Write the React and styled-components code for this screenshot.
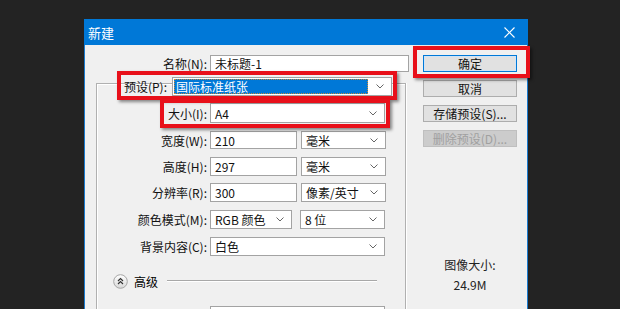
import React from "react";
import styled, { createGlobalStyle } from "styled-components";

const GlobalStyle = createGlobalStyle`
  html, body { margin: 0; padding: 0; background: #232323; overflow: hidden; }
  body { font-family: "Noto Sans CJK SC", "Noto Sans", sans-serif; font-size: 12px; color: #000; }
  * { box-sizing: border-box; }
`;

const Desktop = styled.div`
  width: 620px;
  height: 309px;
  overflow: hidden;
  padding: 19px 0 0 84px;
  background: #232323;
`;

const Window = styled.div`
  position: relative;
  width: 444px;
  height: 300px;
  background: #f0f0f0;
  box-shadow: inset 1px 0 0 #1a7bd0, inset -1px 0 0 #1a7bd0;
`;

const TitleBar = styled.div`
  height: 26px;
  background: #0078d7;
  color: #fff;
  display: flex;
  align-items: center;
  justify-content: space-between;
  padding: 0 13px 0 4px;
  font-size: 13px;
`;

const Body = styled.div`
  display: flex;
`;

const LeftCol = styled.div`
  width: 339px;
  display: flex;
  flex-direction: column;
`;

const Group = styled.div`
  margin: 11px 0 0 12px;
  width: 310px;
  height: 260px;
  border: 1px solid #b0b0b0;
  box-shadow: inset 1px 1px 0 #fff, 1px 0 0 #fff;
  display: flex;
  flex-direction: column;
`;

const Row = styled.div`
  display: flex;
  align-items: center;
  gap: ${(p) => p.$gap ?? 3}px;
  margin-top: ${(p) => p.$mt}px;
  height: ${(p) => p.$h ?? 19}px;
  flex-shrink: 0;
`;

const Label = styled.span`
  width: ${(p) => p.$w}px;
  text-align: right;
  white-space: nowrap;
  color: #111;
`;

const Fields = styled.div`
  display: flex;
  gap: ${(p) => p.$gap ?? 4}px;
  height: 100%;
`;

const TextBox = styled.div`
  width: ${(p) => p.$w}px;
  height: 100%;
  background: #fff;
  border: 1px solid #a3a3a3;
  padding: 0 7px 0 4px;
  display: flex;
  align-items: center;
  justify-content: space-between;
  white-space: nowrap;
  color: #111;
`;

const Selected = styled.span`
  flex: 1;
  align-self: stretch;
  margin: 1px 8px 1px -3px;
  padding-left: 2px;
  background: #0078d7;
  color: #fff;
  outline: 1px dotted #c88a3a;
  outline-offset: -1px;
  display: flex;
  align-items: center;
`;

const AdvancedRow = styled.div`
  display: flex;
  align-items: center;
  height: 18px;
  margin-top: 16px;
  padding-left: 16px;
  gap: 6px;
  flex-shrink: 0;
`;

const Etched = styled.div`
  flex: 1;
  height: 2px;
  border-top: 1px solid #a8a8a8;
  border-bottom: 1px solid #fff;
  margin: 0 28px 0 3px;
`;

const RightCol = styled.div`
  width: 94px;
  padding-top: 10px;
  display: flex;
  flex-direction: column;
  gap: 8px;
`;

const Button = styled.button`
  width: 94px;
  height: 17px;
  padding: 0;
  font: inherit;
  font-size: 12px;
  line-height: 15px;
  background: ${(p) => (p.$disabled ? "#cccccc" : "#e1e1e1")};
  color: ${(p) => (p.$disabled ? "#a0a0a0" : "#111")};
  border: 1px solid ${(p) => (p.$primary ? "#0078d7" : p.$disabled ? "#bfbfbf" : "#adadad")};
  box-shadow: ${(p) => (p.$primary ? "inset 0 0 0 1px #cfe4f7" : "none")};
`;

const ImageSize = styled.div`
  margin-top: 100px;
  text-align: center;
  line-height: 20px;
  color: #222;
`;

const Mark = styled.div`
  position: absolute;
  left: ${(p) => p.$x}px;
  top: ${(p) => p.$y}px;
  width: ${(p) => p.$w}px;
  height: ${(p) => p.$h}px;
  border: 4px solid #e8101a;
  box-shadow: 2px 2px 3px rgba(0, 0, 0, 0.45);
  pointer-events: none;
`;

const Chevron = () => (
  <svg width="8" height="5" viewBox="0 0 8 5">
    <polyline points="0.5,0.5 4,4 7.5,0.5" fill="none" stroke="#666" strokeWidth="1" />
  </svg>
);

const CloseIcon = () => (
  <svg width="11" height="11" viewBox="0 0 11 11">
    <line x1="0.5" y1="0.5" x2="10.5" y2="10.5" stroke="#fff" strokeWidth="1.1" />
    <line x1="10.5" y1="0.5" x2="0.5" y2="10.5" stroke="#fff" strokeWidth="1.1" />
  </svg>
);

const CollapseIcon = () => (
  <svg width="15" height="15" viewBox="0 0 15 15">
    <defs>
      <linearGradient id="cg" x1="0" y1="0" x2="0" y2="1">
        <stop offset="0" stopColor="#ffffff" />
        <stop offset="1" stopColor="#d8d8d8" />
      </linearGradient>
    </defs>
    <circle cx="7.5" cy="7.5" r="6.8" fill="url(#cg)" stroke="#a5a5a5" strokeWidth="1" />
    <polyline points="5,7 7.5,4.6 10,7" fill="none" stroke="#333" strokeWidth="1.2" />
    <polyline points="5,10 7.5,7.6 10,10" fill="none" stroke="#333" strokeWidth="1.2" />
  </svg>
);

export default function App() {
  return (
    <>
      <GlobalStyle />
      <Desktop>
        <Window>
          <TitleBar>
            <span>新建</span>
            <CloseIcon />
          </TitleBar>
          <Body>
            <LeftCol>
              <Row $mt={10} $h={17}>
                <Label $w={123}>名称(N):</Label>
                <TextBox $w={199}>未标题-1</TextBox>
              </Row>
              <Group>
                <Row $mt={-7} $h={19} $gap={5}>
                  <Label $w={70}>预设(P):</Label>
                  <TextBox $w={220}>
                    <Selected>国际标准纸张</Selected>
                    <Chevron />
                  </TextBox>
                </Row>
                <Row $mt={7} $h={20}>
                  <Label $w={110}>大小(I):</Label>
                  <TextBox $w={175}>
                    A4
                    <Chevron />
                  </TextBox>
                </Row>
                <Row $mt={8} $h={18}>
                  <Label $w={110}>宽度(W):</Label>
                  <Fields>
                    <TextBox $w={87}>210</TextBox>
                    <TextBox $w={85}>
                      毫米
                      <Chevron />
                    </TextBox>
                  </Fields>
                </Row>
                <Row $mt={8}>
                  <Label $w={110}>高度(H):</Label>
                  <Fields>
                    <TextBox $w={87}>297</TextBox>
                    <TextBox $w={85}>
                      毫米
                      <Chevron />
                    </TextBox>
                  </Fields>
                </Row>
                <Row $mt={7}>
                  <Label $w={110}>分辨率(R):</Label>
                  <Fields>
                    <TextBox $w={87}>300</TextBox>
                    <TextBox $w={85}>
                      像素/英寸
                      <Chevron />
                    </TextBox>
                  </Fields>
                </Row>
                <Row $mt={8}>
                  <Label $w={110}>颜色模式(M):</Label>
                  <Fields $gap={8}>
                    <TextBox $w={82}>
                      RGB 颜色
                      <Chevron />
                    </TextBox>
                    <TextBox $w={85}>
                      8 位
                      <Chevron />
                    </TextBox>
                  </Fields>
                </Row>
                <Row $mt={8}>
                  <Label $w={110}>背景内容(C):</Label>
                  <TextBox $w={175}>
                    白色
                    <Chevron />
                  </TextBox>
                </Row>
                <AdvancedRow>
                  <CollapseIcon />
                  <span>高级</span>
                  <Etched />
                </AdvancedRow>
                <Row $mt={16}>
                  <Label $w={110}></Label>
                  <TextBox $w={175}>
                    <span />
                    <Chevron />
                  </TextBox>
                </Row>
              </Group>
            </LeftCol>
            <RightCol>
              <Button $primary>确定</Button>
              <Button>取消</Button>
              <Button>存储预设(S)...</Button>
              <Button $disabled>删除预设(D)...</Button>
              <ImageSize>
                图像大小:
                <br />
                24.9M
              </ImageSize>
            </RightCol>
          </Body>
          <Mark $x={33} $y={52} $w={280} $h={29} />
          <Mark $x={76} $y={80} $w={230} $h={29} />
          <Mark $x={329} $y={27} $w={117} $h={32} />
        </Window>
      </Desktop>
    </>
  );
}
